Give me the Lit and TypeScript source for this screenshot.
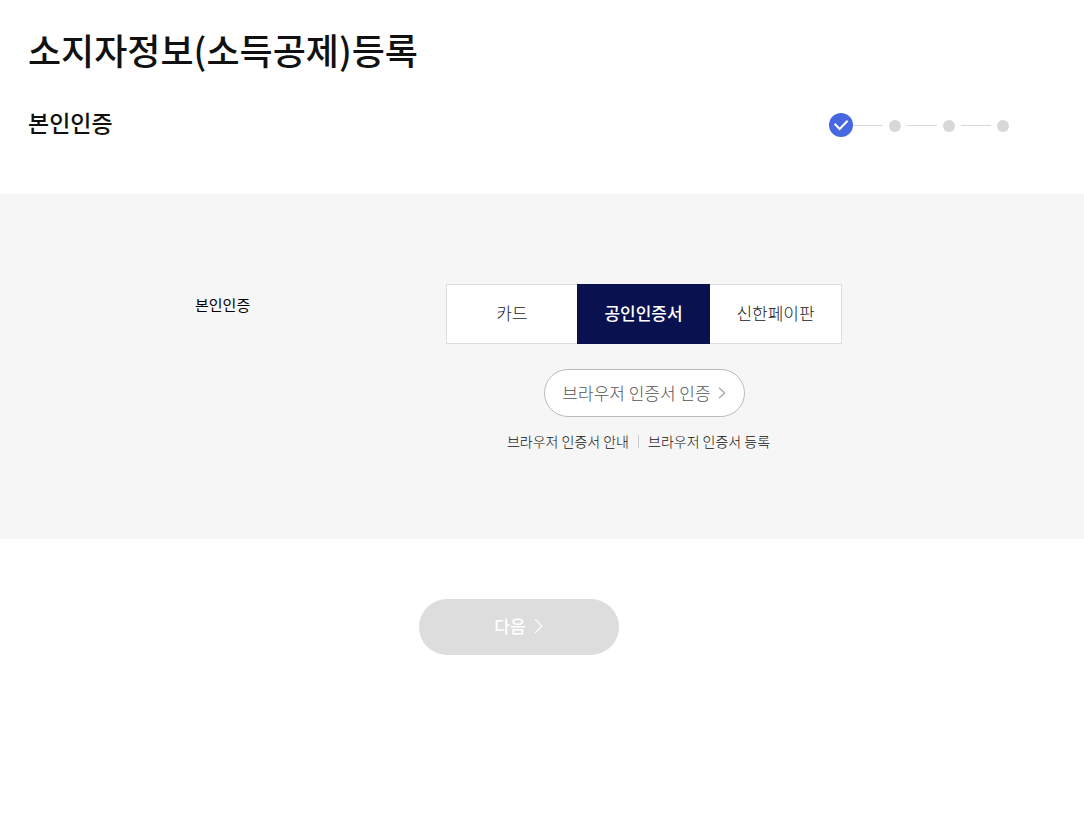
import { LitElement, html, css } from "lit";
import { customElement, state } from "lit/decorators.js";
import { classMap } from "lit/directives/class-map.js";

@customElement("step-progress")
class StepProgress extends LitElement {
  static styles = css`
    :host {
      display: block;
    }
    .steps {
      display: flex;
      align-items: center;
      margin: 0;
      padding: 0;
      list-style: none;
    }
    .step {
      display: flex;
      align-items: center;
      height: 24px;
    }
    .dot {
      width: 12px;
      height: 12px;
      margin: 2px 0 0 6px;
      border-radius: 50%;
      background: #d8d8d8;
    }
    .line {
      width: 30px;
      height: 1px;
      background: #d8d8d8;
    }
    .dot + .line {
      margin-left: 6px;
    }
    .check {
      display: block;
      width: 24px;
      height: 24px;
    }
  `;

  render() {
    return html`
      <ol class="steps" aria-label="진행 단계">
        <li class="step" aria-current="step">
          <svg class="check" viewBox="0 0 24 24" aria-hidden="true">
            <circle cx="12" cy="12" r="12" fill="#4668e0" />
            <path d="M5.6 10.8l5 5.2 8-8.2" fill="none" stroke="#fff" stroke-width="2" />
          </svg>
          <span class="line"></span>
        </li>
        <li class="step"><span class="dot"></span><span class="line"></span></li>
        <li class="step"><span class="dot"></span><span class="line"></span></li>
        <li class="step"><span class="dot"></span></li>
      </ol>
    `;
  }
}

@customElement("app-root")
class AppRoot extends LitElement {
  @state() selected = 1;

  private methods = ["카드", "공인인증서", "신한페이판"];

  static styles = css`
    :host {
      display: block;
      font-family: "Noto Sans CJK KR", sans-serif;
      color: #111;
    }
    .inner {
      padding: 0 75px 0 28px;
    }
    .title {
      margin: 0;
      padding-top: 22px;
      font-size: 36px;
      line-height: 54px;
      font-weight: 500;
    }
    .heading {
      display: flex;
      align-items: flex-end;
      justify-content: space-between;
      padding: 31px 0 57px;
    }
    .subtitle {
      margin: 0;
      font-size: 23px;
      line-height: 30px;
      font-weight: 500;
    }
    .panel {
      background: #f6f6f6;
      padding: 90px 0 87px;
    }
    .row {
      display: grid;
      grid-template-columns: 251px 396px;
      justify-content: center;
    }
    .label {
      margin: 0;
      padding-top: 9px;
      font-size: 15px;
      line-height: 24px;
      font-weight: 400;
      color: #000;
    }
    .controls {
      display: flex;
      flex-direction: column;
      align-items: center;
    }
    .tabs {
      display: grid;
      grid-template-columns: 131px 133px 132px;
      width: 100%;
    }
    button {
      box-sizing: border-box;
      margin: 0;
      font-family: inherit;
      cursor: pointer;
    }
    .tab {
      height: 60px;
      padding: 0 0 2px;
      border: 1px solid #ddd;
      background: #fff;
      color: #222;
      font-size: 17px;
      line-height: 24px;
      font-weight: 300;
    }
    .tab:first-child {
      border-right: 0;
    }
    .tab:last-child {
      border-left: 0;
    }
    .tab.active {
      border-color: #09124f;
      background: #09124f;
      color: #fff;
      font-weight: 500;
    }
    .browser {
      display: flex;
      align-items: center;
      justify-content: center;
      gap: 7px;
      width: 201px;
      height: 48px;
      margin-top: 25px;
      padding: 0 0 1px;
      border: 1px solid #bbb;
      border-radius: 24px;
      background: #fff;
      color: #555;
      font-size: 17px;
      line-height: 24px;
      font-weight: 300;
      white-space: nowrap;
    }
    .links {
      display: flex;
      align-items: center;
      gap: 9px;
      margin-top: 13px;
      padding-right: 11px;
    }
    .link {
      color: #111;
      font-size: 14px;
      line-height: 22px;
      font-weight: 300;
      text-decoration: none;
      white-space: nowrap;
    }
    .divider {
      width: 1px;
      height: 13px;
      background: #ccc;
    }
    .actions {
      display: flex;
      justify-content: center;
      padding-top: 60px;
      padding-bottom: 60px;
    }
    .next {
      display: flex;
      align-items: center;
      justify-content: center;
      gap: 8px;
      width: 200px;
      height: 56px;
      padding: 0 0 2px;
      border: 0;
      border-radius: 28px;
      background: #ddd;
      color: #fff;
      font-size: 17px;
      line-height: 24px;
      font-weight: 500;
      cursor: default;
    }
    .arrow {
      display: block;
      fill: none;
      stroke: currentColor;
    }
    .browser .arrow {
      color: #aaa;
    }
  `;

  render() {
    return html`
      <header class="inner">
        <h1 class="title">소지자정보(소득공제)등록</h1>
        <div class="heading">
          <h2 class="subtitle">본인인증</h2>
          <step-progress></step-progress>
        </div>
      </header>
      <main>
        <section class="panel">
          <div class="inner row">
            <h3 class="label" id="method">본인인증</h3>
            <div class="controls">
              <div class="tabs" role="group" aria-labelledby="method">
                ${this.methods.map(
                  (name, i) => html`
                    <button
                      type="button"
                      class=${classMap({ tab: true, active: i === this.selected })}
                      aria-pressed=${i === this.selected ? "true" : "false"}
                      @click=${() => (this.selected = i)}
                    >${name}</button>
                  `
                )}
              </div>
              <button type="button" class="browser">
                <span>브라우저 인증서 인증</span>
                <svg class="arrow" width="8" height="12" viewBox="0 0 8 12" aria-hidden="true">
                  <path d="M1 0.7L6.7 6L1 11.3" stroke-width="1.3" />
                </svg>
              </button>
              <div class="links">
                <a class="link" href="#guide">브라우저 인증서 안내</a>
                <span class="divider"></span>
                <a class="link" href="#register">브라우저 인증서 등록</a>
              </div>
            </div>
          </div>
        </section>
        <div class="inner actions">
          <button type="button" class="next" disabled>
            <span>다음</span>
            <svg class="arrow" width="9" height="16" viewBox="0 0 9 16" aria-hidden="true">
              <path d="M1 1.2L7.8 8L1 14.8" stroke-width="1.2" />
            </svg>
          </button>
        </div>
      </main>
    `;
  }
}
